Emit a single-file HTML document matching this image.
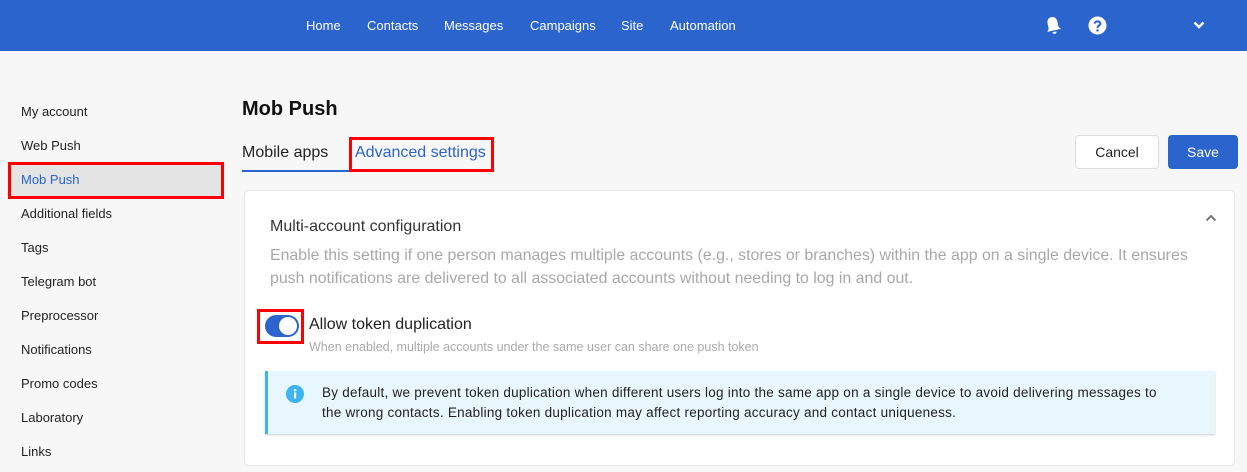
<!DOCTYPE html>
<html><head><meta charset="utf-8"><style>
*{box-sizing:border-box;margin:0;padding:0}
body{width:1247px;height:472px;overflow:hidden;background:#f7f7f7;font-family:"Liberation Sans",Arial,sans-serif;color:#222;position:relative}
.hdr{position:absolute;left:0;top:0;width:1247px;height:51px;background:#2a64cc}
.nav{position:absolute;top:18px;color:#fff;font-size:13px}
.side{position:absolute;left:21px;font-size:13px;color:#222}
.abs{position:absolute}
</style></head><body>
<div class="hdr">
<span class="nav" style="left:306px">Home</span>
<span class="nav" style="left:367px">Contacts</span>
<span class="nav" style="left:444px">Messages</span>
<span class="nav" style="left:530px">Campaigns</span>
<span class="nav" style="left:621px">Site</span>
<span class="nav" style="left:670px">Automation</span>
<svg class="abs" style="left:1043px;top:14px" width="20" height="22" viewBox="0 0 20 22"><g transform="rotate(-12 10 11)"><path d="M5 14 L5 9 C5 5 7 3 10 3 C13 3 15 5 15 9 L15 14 L17 16.5 L3 16.5 Z" fill="#fff"/><path d="M8 18 A2 2 0 0 0 12 18 Z" fill="#fff"/></g></svg>
<svg class="abs" style="left:1088px;top:16px" width="19" height="19" viewBox="0 0 20 20"><circle cx="10" cy="10" r="9.5" fill="#fff"/><path d="M7 8 C7 5 13 5 13 8 C13 10 10 10 10 12.5" stroke="#2a64cc" stroke-width="2.2" fill="none"/><circle cx="10" cy="15.2" r="1.3" fill="#2a64cc"/></svg>
<svg class="abs" style="left:1193px;top:21px" width="12" height="8" viewBox="0 0 12 8"><path d="M1.5 1.5 L6 6 L10.5 1.5" stroke="#fff" stroke-width="2.4" fill="none"/></svg>
</div>
<div class="side" style="top:104px">My account</div>
<div class="side" style="top:138px">Web Push</div>
<div class="abs" style="left:8px;top:162px;width:216px;height:37px;background:#e4e4e4;border:3px solid #f00"></div>
<div class="side" style="top:172px;color:#2a64cc">Mob Push</div>
<div class="side" style="top:206px">Additional fields</div>
<div class="side" style="top:240px">Tags</div>
<div class="side" style="top:274px">Telegram bot</div>
<div class="side" style="top:308px">Preprocessor</div>
<div class="side" style="top:342px">Notifications</div>
<div class="side" style="top:376px">Promo codes</div>
<div class="side" style="top:410px">Laboratory</div>
<div class="side" style="top:444px">Links</div>

<div class="abs" style="left:242px;top:98px;font-size:20px;font-weight:bold;color:#111">Mob Push</div>
<div class="abs" style="left:242px;top:144px;font-size:16px;color:#222">Mobile apps</div>
<div class="abs" style="left:242px;top:170px;width:107px;height:2px;background:#2a64cc"></div>
<div class="abs" style="left:349px;top:137px;width:145px;height:35px;border:3px solid #f00"></div>
<div class="abs" style="left:355px;top:144px;font-size:16px;color:#2a64cc">Advanced settings</div>
<div class="abs" style="left:1075px;top:135px;width:84px;height:34px;background:#fff;border:1px solid #ddd;border-radius:4px;font-size:14px;text-align:center;line-height:32px">Cancel</div>
<div class="abs" style="left:1168px;top:135px;width:70px;height:34px;background:#2a64cc;border-radius:4px;font-size:14px;color:#fff;text-align:center;line-height:34px">Save</div>

<div class="abs" style="left:244px;top:190px;width:991px;height:276px;background:#fff;border:1px solid #e6e6e6;border-radius:5px"></div>
<div class="abs" style="left:270px;top:218px;font-size:16px;color:#333">Multi-account configuration</div>
<svg class="abs" style="left:1205px;top:214px" width="12" height="8" viewBox="0 0 12 8"><path d="M1.5 6.5 L6 2 L10.5 6.5" stroke="#777" stroke-width="2" fill="none"/></svg>
<div class="abs" style="left:270px;top:244px;width:935px;font-size:15.9px;line-height:23px;color:#a8a8a8">Enable this setting if one person manages multiple accounts (e.g., stores or branches) within the app on a single device. It ensures push notifications are delivered to all associated accounts without needing to log in and out.</div>
<div class="abs" style="left:257px;top:309px;width:47px;height:35px;border:3px solid #f00"></div>
<div class="abs" style="left:265px;top:315px;width:34px;height:22px;border-radius:11px;background:#2a64cc"></div>
<div class="abs" style="left:279px;top:317px;width:18px;height:18px;border-radius:50%;background:#fff"></div>
<div class="abs" style="left:309px;top:316px;font-size:16px;color:#222">Allow token duplication</div>
<div class="abs" style="left:309px;top:340px;font-size:12.5px;color:#aaa">When enabled, multiple accounts under the same user can share one push token</div>
<div class="abs" style="left:265px;top:371px;width:950px;height:63px;background:#e8f7fd;border-left:3px solid #3db3f0;box-shadow:0 1px 2px rgba(0,0,0,.2)"></div>
<svg class="abs" style="left:286px;top:385px" width="18" height="18" viewBox="0 0 18 18"><circle cx="9" cy="9" r="9" fill="#3db3f0"/><rect x="8" y="7.5" width="2.2" height="6" fill="#fff"/><circle cx="9.1" cy="5" r="1.3" fill="#fff"/></svg>
<div class="abs" style="left:322px;top:383px;width:880px;font-size:13.5px;line-height:20px;color:#222;letter-spacing:0.25px">By default, we prevent token duplication when different users log into the same app on a single device to avoid delivering messages to<br>the wrong contacts. Enabling token duplication may affect reporting accuracy and contact uniqueness.</div>
</body></html>
